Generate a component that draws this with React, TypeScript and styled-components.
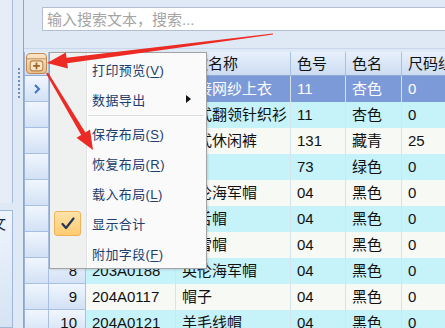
import React from 'react';
import styled, { createGlobalStyle } from 'styled-components';

const GlobalStyle = createGlobalStyle`
  html, body {
    margin: 0;
    padding: 0;
  }
  body {
    font-family: "Liberation Sans", "Noto Sans CJK SC", sans-serif;
    background: #dfe9f5;
  }
`;

const Screen = styled.div`
  position: relative;
  width: 445px;
  height: 328px;
  overflow: hidden;
  display: flex;
  background: #dfe9f5;
`;

const SideRail = styled.div`
  width: 23px;
  flex: none;
  display: flex;
`;

const SideColumn = styled.div`
  width: 13px;
  display: flex;
  flex-direction: column;
  gap: 7px;
`;

const SidePanel = styled.div`
  height: 203px;
  flex: none;
  background: #e6edf7;
  border-right: 1px solid #a7bddb;
  box-sizing: border-box;
`;

const SideTab = styled.div`
  flex: 1;
  overflow: hidden;
  background: linear-gradient(#eef4fc, #d6e3f4);
  border: 1px solid #9fb7d8;
  border-left: none;
  box-sizing: border-box;
  font-size: 15px;
  line-height: 26px;
  color: #1d2c44;
  text-indent: -9px;
  white-space: nowrap;
`;

const Splitter = styled.div`
  flex: 1;
  padding: 68px 0 0 5px;
`;

const SplitDots = styled.div`
  width: 2px;
  height: 32px;
  background: repeating-linear-gradient(#6f8fbd 0 2px, transparent 2px 4px);
`;

const Main = styled.div`
  flex: 1;
  display: flex;
  flex-direction: column;
  border-left: 1px solid #8ca6cb;
  min-width: 0;
  overflow: hidden;
`;

const TopBar = styled.div`
  height: 49px;
  flex: none;
  padding: 7px 0 0 18px;
  box-sizing: border-box;
  border-bottom: 1px solid #c8d7eb;
  display: flex;
  align-items: flex-start;
`;

const SearchBox = styled.div`
  flex: 1;
  height: 24px;
  box-sizing: border-box;
  background: #ffffff;
  border: 1px solid #b2bfd0;
  border-right: none;
  padding-left: 4px;
  font-size: 15px;
  line-height: 23px;
  color: #a4a4a4;
`;

const Grid = styled.div`
  flex: none;
  margin-top: 3px;
  border-left: 1px solid #9ab3d6;
  display: flex;
  flex-direction: column;
`;

const Row = styled.div<{ $h: number; $bg?: string; $fg?: string }>`
  display: flex;
  height: ${p => p.$h}px;
  flex: none;
  background: ${p => p.$bg || 'transparent'};
  color: ${p => p.$fg || '#111'};
`;

const HeadCell = styled.div<{ $w: number; $pad?: number }>`
  width: ${p => p.$w}px;
  flex: none;
  box-sizing: border-box;
  padding-left: ${p => p.$pad ?? 6}px;
  background: linear-gradient(#e7f0fc, #cddcf2);
  border-right: 1px solid #a8c0e1;
  border-bottom: 1px solid #8eabd4;
  font-size: 15px;
  line-height: 23px;
  white-space: nowrap;
  overflow: hidden;
  color: #111;
`;

const IconHeadCell = styled(HeadCell)`
  display: flex;
  align-items: center;
  justify-content: center;
  padding: 0;
`;

const RowHead = styled.div<{ $w: number }>`
  width: ${p => p.$w}px;
  flex: none;
  box-sizing: border-box;
  display: flex;
  align-items: center;
  justify-content: flex-end;
  padding-right: 8px;
  background: linear-gradient(#f1f6fe, #d2e1f5);
  border-right: 1px solid #a6bfe2;
  border-bottom: 1px solid #a6bfe2;
  font-size: 15px;
  color: #111;
`;

const IndicatorCell = styled(RowHead)`
  justify-content: center;
  padding: 0;
`;

const DataCell = styled.div<{ $w: number }>`
  width: ${p => p.$w}px;
  flex: none;
  box-sizing: border-box;
  padding-left: 6px;
  border-right: 1px solid #d6e3ea;
  font-size: 15px;
  line-height: 26px;
  white-space: nowrap;
  overflow: hidden;
`;

const Menu = styled.div`
  position: absolute;
  left: 49px;
  top: 52px;
  width: 158px;
  height: 217px;
  box-sizing: border-box;
  border: 1px solid #a3a3a3;
  padding-top: 1px;
  background: linear-gradient(
    to right,
    #eff0f0 0 36px,
    #e0e1e2 36px 37px,
    #ffffff 37px 38px,
    #fafafa 38px
  );
  box-shadow: 1px 1px 2px rgba(0, 0, 0, 0.12);
  display: flex;
  flex-direction: column;
`;

const MenuItem = styled.div`
  height: 30px;
  display: flex;
  align-items: center;
  flex: none;
`;

const Gutter = styled.div`
  width: 37px;
  height: 100%;
  flex: none;
  display: flex;
  align-items: center;
  padding-left: 4px;
  box-sizing: border-box;
`;

const MenuLabel = styled.div`
  flex: 1;
  padding-left: 5px;
  font-size: 13px;
  letter-spacing: 0.4px;
  color: #203d6e;
  white-space: nowrap;

  u {
    text-decoration: underline;
    text-underline-offset: 2px;
  }
`;

const SubArrow = styled.div`
  width: 0;
  height: 0;
  margin-right: 15px;
  border-left: 5px solid #111;
  border-top: 4px solid transparent;
  border-bottom: 4px solid transparent;
`;

const MenuSeparator = styled.div`
  height: 4px;
  flex: none;
  margin-left: 38px;
  margin-right: 2px;
  display: flex;
  flex-direction: column;
  justify-content: center;

  &::before {
    content: '';
    height: 1px;
    background: #dcdcdc;
  }
  &::after {
    content: '';
    height: 1px;
    background: #ffffff;
  }
`;

const CheckBox = styled.div`
  width: 27px;
  height: 25px;
  box-sizing: border-box;
  border: 1px solid #efb257;
  border-radius: 3px;
  background: linear-gradient(#ffe3a9, #ffcb70);
  display: flex;
  align-items: center;
  justify-content: center;
`;

const Overlay = styled.svg`
  position: absolute;
  left: 0;
  top: 0;
  pointer-events: none;
`;

const W = { ind: 24, num: 37, code: 90, name: 115, no: 55, cname: 56, size: 100 };

const rows = [
  { code: '201A0056', name: '拼接网纱上衣', no: '11', cname: '杏色', size: '0' },
  { code: '201A0078', name: '男式翻领针织衫', no: '11', cname: '杏色', size: '0' },
  { code: '202A0035', name: '男式休闲裤', no: '131', cname: '藏青', size: '25' },
  { code: '201A0102', name: 'T恤', no: '73', cname: '绿色', size: '0' },
  { code: '203A0186', name: '英伦海军帽', no: '04', cname: '黑色', size: '0' },
  { code: '204A0110', name: '鸭舌帽', no: '04', cname: '黑色', size: '0' },
  { code: '204A0112', name: '贝雷帽', no: '04', cname: '黑色', size: '0' },
  { code: '203A0188', name: '英伦海军帽', no: '04', cname: '黑色', size: '0' },
  { code: '204A0117', name: '帽子', no: '04', cname: '黑色', size: '0' },
  { code: '204A0121', name: '羊毛线帽', no: '04', cname: '黑色', size: '0' },
];

const rowColors = (i: number) => {
  if (i === 0) return { bg: '#7c9ad8', fg: '#ffffff' };
  return i % 2 === 1 ? { bg: '#c6f2f9', fg: '#111' } : { bg: '#f7f9f5', fg: '#111' };
};

const CustomizeIcon = () => (
  <svg width="21" height="21" viewBox="0 0 20 20">
    <defs>
      <linearGradient id="boxg" x1="0" y1="0" x2="0" y2="1">
        <stop offset="0" stopColor="#fbe6cc" />
        <stop offset="1" stopColor="#e7bd8c" />
      </linearGradient>
    </defs>
    <rect x="0.5" y="0.5" width="19" height="19" rx="3.5" fill="url(#boxg)" stroke="#c08c52" />
    <line x1="1" y1="5.5" x2="19" y2="5.5" stroke="#c4925c" />
    <rect x="4" y="7.5" width="12" height="9.5" rx="2.5" fill="#fae4c8" stroke="#b9844a" />
    <path d="M10 9 V15.5 M6.8 12.2 H13.2" stroke="#9a6428" strokeWidth="1.6" />
  </svg>
);

const Chevron = () => (
  <svg width="10" height="12" viewBox="0 0 10 12">
    <path d="M3 2 L7 6 L3 10" fill="none" stroke="#3f74c6" strokeWidth="2" />
  </svg>
);

const CheckMark = () => (
  <svg width="14" height="13" viewBox="0 0 14 13">
    <path d="M1.5 7 L5 11 L12.5 1.5" fill="none" stroke="#24365a" strokeWidth="2.2" strokeLinecap="round" strokeLinejoin="round" />
  </svg>
);

const menuItems: { label: string; key?: string; sub?: boolean; checked?: boolean; sep?: boolean }[] = [
  { label: '打印预览', key: 'V' },
  { label: '数据导出', sub: true },
  { label: '', sep: true },
  { label: '保存布局', key: 'S' },
  { label: '恢复布局', key: 'R' },
  { label: '载入布局', key: 'L' },
  { label: '显示合计', checked: true },
  { label: '附加字段', key: 'F' },
];

export default function App() {
  return (
    <>
      <GlobalStyle />
      <Screen>
        <SideRail>
          <SideColumn>
            <SidePanel />
            <SideTab>文</SideTab>
          </SideColumn>
          <Splitter>
            <SplitDots />
          </Splitter>
        </SideRail>

        <Main>
          <TopBar>
            <SearchBox>输入搜索文本，搜索...</SearchBox>
          </TopBar>

          <Grid>
            <Row $h={24}>
              <IconHeadCell $w={W.ind}>
                <CustomizeIcon />
              </IconHeadCell>
              <HeadCell $w={W.num} />
              <HeadCell $w={W.code}>款号</HeadCell>
              <HeadCell $w={W.name} $pad={17}>款名称</HeadCell>
              <HeadCell $w={W.no}>色号</HeadCell>
              <HeadCell $w={W.cname}>色名</HeadCell>
              <HeadCell $w={W.size}>尺码组</HeadCell>
            </Row>

            {rows.map((r, i) => {
              const c = rowColors(i);
              return (
                <Row key={i} $h={26}>
                  <IndicatorCell $w={W.ind}>{i === 0 && <Chevron />}</IndicatorCell>
                  <RowHead $w={W.num}>{i + 1}</RowHead>
                  <Row $h={26} $bg={c.bg} $fg={c.fg}>
                    <DataCell $w={W.code}>{r.code}</DataCell>
                    <DataCell $w={W.name}>{r.name}</DataCell>
                    <DataCell $w={W.no}>{r.no}</DataCell>
                    <DataCell $w={W.cname}>{r.cname}</DataCell>
                    <DataCell $w={W.size}>{r.size}</DataCell>
                  </Row>
                </Row>
              );
            })}
          </Grid>
        </Main>

        <Menu>
          {menuItems.map((m, i) =>
            m.sep ? (
              <MenuSeparator key={i} />
            ) : (
              <MenuItem key={i}>
                <Gutter>
                  {m.checked && (
                    <CheckBox>
                      <CheckMark />
                    </CheckBox>
                  )}
                </Gutter>
                <MenuLabel>
                  {m.label}
                  {m.key && (
                    <>
                      (<u>{m.key}</u>)
                    </>
                  )}
                </MenuLabel>
                {m.sub && <SubArrow />}
              </MenuItem>
            )
          )}
        </Menu>

        <Overlay width="445" height="328" viewBox="0 0 445 328">
          <polygon
            fill="#ec2b24"
            points="47,63 67.9,68.4 67.2,63.2 273.1,34.6 272.9,33.4 66.5,57.7 65.8,52.5"
          />
          <polygon
            fill="#ec2b24"
            points="93,150 76.5,137.8 81.2,135 46,73.6 48,72.4 85.4,132.4 90,129.6"
          />
        </Overlay>
      </Screen>
    </>
  );
}
